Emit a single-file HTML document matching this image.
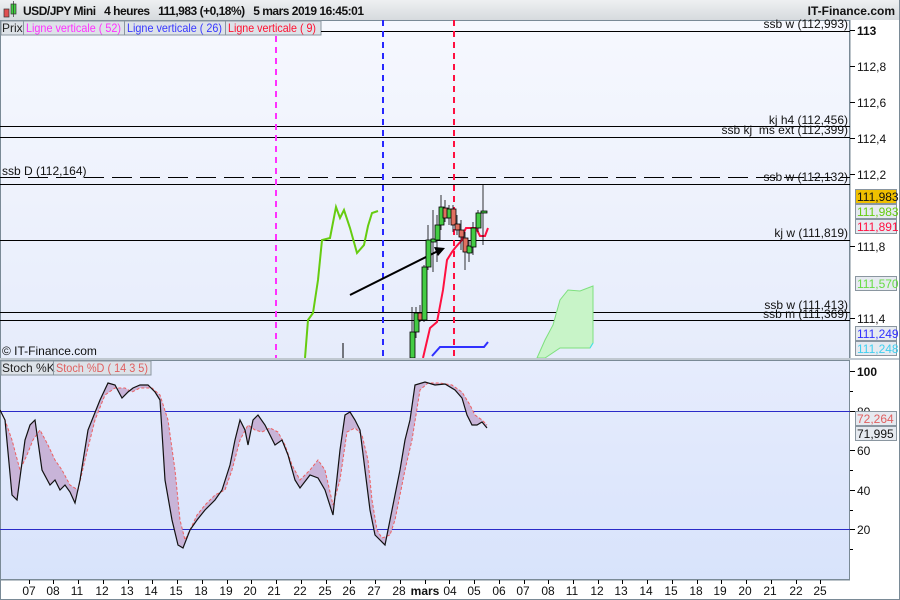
<!DOCTYPE html>
<html><head><meta charset="utf-8"><style>
body{margin:0;width:900px;height:600px;overflow:hidden;background:#fff;font-family:"Liberation Sans",sans-serif;}
svg{display:block}
text{white-space:pre}
</style></head><body>
<svg width="900" height="600" viewBox="0 0 900 600" xmlns="http://www.w3.org/2000/svg" font-family="Liberation Sans, sans-serif" font-size="12" xml:space="preserve">
<defs>
<linearGradient id="g1" x1="0" y1="0" x2="0" y2="1"><stop offset="0" stop-color="#f6f8fe"/><stop offset="1" stop-color="#e6ecfb"/></linearGradient>
<linearGradient id="g2" x1="0" y1="0" x2="0" y2="1"><stop offset="0" stop-color="#e6ecfd"/><stop offset="1" stop-color="#d8e3fb"/></linearGradient>
<linearGradient id="gh" x1="0" y1="0" x2="0" y2="1"><stop offset="0" stop-color="#eef0f2"/><stop offset="1" stop-color="#d6dade"/></linearGradient>
</defs>
<rect x="0" y="0" width="900" height="600" fill="#fff"/>
<rect x="0" y="0" width="900" height="20" fill="url(#gh)"/>
<rect x="4" y="9" width="5" height="8" fill="#e05050" stroke="#333" stroke-width="0.7"/>
<rect x="11" y="4" width="5" height="10" fill="#40d040" stroke="#333" stroke-width="0.7"/>
<line x1="13.5" y1="1" x2="13.5" y2="17" stroke="#333" stroke-width="0.7"/>
<text x="23" y="15" font-weight="bold" font-size="12" fill="#111" textLength="341" lengthAdjust="spacing">USD/JPY Mini   4 heures   111,983 (+0,18%)   5 mars 2019 16:45:01</text>
<text x="895" y="15" font-weight="bold" font-size="12" fill="#111" text-anchor="end">IT-Finance.com</text>
<rect x="0.5" y="20.5" width="849" height="338" fill="url(#g1)" stroke="#7a8a96"/>
<line x1="850" y1="20" x2="850" y2="358" stroke="#7a8a96"/>
<rect x="1" y="21" width="320" height="14" fill="#dde2e8" stroke="#8a96a0"/>
<text x="2" y="32" font-size="12" fill="#222">Prix</text>
<line x1="23.5" y1="21" x2="23.5" y2="35" stroke="#8a96a0"/>
<text x="26" y="32" font-size="12" fill="#ff30ff" textLength="95" lengthAdjust="spacingAndGlyphs">Ligne verticale ( 52)</text>
<line x1="124.5" y1="21" x2="124.5" y2="35" stroke="#8a96a0"/>
<text x="127" y="32" font-size="12" fill="#3838ff" textLength="95" lengthAdjust="spacingAndGlyphs">Ligne verticale ( 26)</text>
<line x1="225.5" y1="21" x2="225.5" y2="35" stroke="#8a96a0"/>
<text x="228" y="32" font-size="12" fill="#ff1030" textLength="88" lengthAdjust="spacingAndGlyphs">Ligne verticale ( 9)</text>
<g stroke="#000" stroke-width="1">
<line x1="321" y1="31.5" x2="850" y2="31.5"/>
<line x1="0" y1="126.5" x2="850" y2="126.5"/>
<line x1="0" y1="137.5" x2="850" y2="137.5"/>
<line x1="0" y1="177.5" x2="850" y2="177.5" stroke-dasharray="20,8"/>
<line x1="0" y1="184.5" x2="850" y2="184.5"/>
<line x1="0" y1="240.5" x2="850" y2="240.5"/>
<line x1="0" y1="312.5" x2="850" y2="312.5"/>
<line x1="0" y1="320.5" x2="850" y2="320.5"/>
</g>
<g font-size="12" fill="#111" text-anchor="end">
<text x="848" y="28">ssb w (112,993)</text>
<text x="848" y="124">kj h4 (112,456)</text>
<text x="848" y="134">ssb kj  ms ext (112,399)</text>
<text x="848" y="181">ssb w (112,132)</text>
<text x="848" y="237">kj w (111,819)</text>
<text x="848" y="309">ssb w (111,413)</text>
<text x="848" y="318">ssb m (111,369)</text>
</g>
<text x="2" y="175" font-size="12" fill="#111">ssb D (112,164)</text>
<line x1="276" y1="36" x2="276" y2="358" stroke="#ff30ff" stroke-width="2" stroke-dasharray="6,5"/>
<line x1="383" y1="20" x2="383" y2="358" stroke="#2828ff" stroke-width="2" stroke-dasharray="6,5"/>
<line x1="454" y1="20" x2="454" y2="358" stroke="#ff1040" stroke-width="2" stroke-dasharray="6,5"/>
<polygon points="537,358 545,340 553,325 560,300 568,290 580,291 593,286 593,343 590,348 560,348 545,358" fill="#c8f4c8" stroke="#7ee07e"/>
<line x1="590" y1="348" x2="593" y2="343" stroke="#40e0f0"/>
<polyline points="305,358 308,320 313,313 318,280 322,240 330,238 336,207 340,218 344,210 350,228 357,253 364,245 368,226 372,213 378,211" fill="none" stroke="#66cc10" stroke-width="2"/>
<line x1="343" y1="343" x2="343" y2="358" stroke="#000"/>
<line x1="350" y1="295" x2="438" y2="251" stroke="#000" stroke-width="2"/>
<polygon points="445,248 434,247 438,256" fill="#000"/>
<polyline points="423,358 430,328 437,322 443,290 447,260 452,252 455,248 462,240 464,232 466,228 476,228 480,236 485,236 488,228" fill="none" stroke="#ff1040" stroke-width="2"/>
<polyline points="432,356 440,347 484,347 488,342" fill="none" stroke="#3030ff" stroke-width="2"/>
<g stroke="#000" stroke-width="0.8">
<line x1="412" y1="307" x2="412" y2="358"/><rect x="410" y="332" width="5" height="26" fill="#44cc44"/>
<line x1="416" y1="307" x2="416" y2="338"/><rect x="414" y="313" width="5" height="19" fill="#44cc44"/>
<line x1="420" y1="305" x2="420" y2="322"/><rect x="418" y="313" width="5" height="7" fill="#e07060"/>
<line x1="424" y1="265" x2="424" y2="322"/><rect x="422" y="267" width="5" height="53" fill="#44cc44"/>
<line x1="428" y1="225" x2="428" y2="270"/><rect x="426" y="240" width="5" height="27" fill="#44cc44"/>
<line x1="433" y1="210" x2="433" y2="272"/><rect x="431" y="239" width="5" height="3" fill="#44cc44"/>
<line x1="437" y1="215" x2="437" y2="262"/><rect x="435" y="225" width="5" height="15" fill="#44cc44"/>
<line x1="441" y1="195" x2="441" y2="230"/><rect x="439" y="207" width="5" height="18" fill="#44cc44"/>
<line x1="445" y1="200" x2="445" y2="222"/><rect x="443" y="208" width="5" height="10" fill="#e07060"/>
<line x1="449" y1="205" x2="449" y2="225"/><rect x="447" y="209" width="5" height="9" fill="#44cc44"/>
<line x1="453" y1="205" x2="453" y2="232"/><rect x="451" y="209" width="5" height="16" fill="#e07060"/>
<line x1="457" y1="215" x2="457" y2="235"/><rect x="455" y="224" width="5" height="6" fill="#e07060"/>
<line x1="461" y1="220" x2="461" y2="250"/><rect x="459" y="230" width="5" height="7" fill="#e07060"/>
<line x1="465" y1="232" x2="465" y2="270"/><rect x="463" y="238" width="5" height="14" fill="#e07060"/>
<line x1="469" y1="240" x2="469" y2="262"/><rect x="467" y="246" width="5" height="7" fill="#44cc44"/>
<line x1="473" y1="222" x2="473" y2="255"/><rect x="471" y="228" width="5" height="19" fill="#44cc44"/>
<line x1="478" y1="210" x2="478" y2="232"/><rect x="476" y="213" width="5" height="15" fill="#44cc44"/>
<line x1="483" y1="185" x2="483" y2="245"/><rect x="481" y="211" width="6" height="2" fill="#44cc44"/>
</g>
<text x="2" y="355" font-size="12" fill="#111">© IT-Finance.com</text>
<g stroke="#000"><line x1="850" y1="30.5" x2="855" y2="30.5"/><line x1="850" y1="66.5" x2="855" y2="66.5"/><line x1="850" y1="102.5" x2="855" y2="102.5"/><line x1="850" y1="138.5" x2="855" y2="138.5"/><line x1="850" y1="174.5" x2="855" y2="174.5"/><line x1="850" y1="246.5" x2="855" y2="246.5"/><line x1="850" y1="318.5" x2="855" y2="318.5"/></g>
<g font-size="12" fill="#111">
<text x="857" y="35" font-weight="bold">113</text>
<text x="857" y="71">112,8</text><text x="857" y="107">112,6</text><text x="857" y="143">112,4</text><text x="857" y="179">112,2</text><text x="857" y="251">111,8</text><text x="857" y="323">111,4</text>
</g>
<g font-size="12">
<rect x="855.5" y="189.5" width="41" height="14" fill="#f0c000" stroke="#8a96a0"/><text x="857" y="201" fill="#111">111,983</text>
<rect x="855.5" y="204.5" width="41" height="14" fill="#e6eaf0" stroke="#8a96a0"/><text x="857" y="216" fill="#66cc10">111,983</text>
<rect x="855.5" y="219.5" width="41" height="14" fill="#e6eaf0" stroke="#8a96a0"/><text x="857" y="231" fill="#ff1040">111,891</text>
<rect x="855.5" y="276.5" width="41" height="14" fill="#e6eaf0" stroke="#8a96a0"/><text x="857" y="288" fill="#66dd44">111,570</text>
<rect x="855.5" y="326.5" width="41" height="14" fill="#e6eaf0" stroke="#8a96a0"/><text x="857" y="338" fill="#3030ff">111,249</text>
<rect x="855.5" y="341.5" width="41" height="14" fill="#e6eaf0" stroke="#8a96a0"/><text x="857" y="353" fill="#40d0f0">111,248</text>
</g>
<line x1="0" y1="359" x2="900" y2="359" stroke="#c0c8d0" stroke-width="2"/>
<rect x="0.5" y="360.5" width="849" height="219" fill="url(#g2)" stroke="#7a8a96"/>
<rect x="1" y="361" width="150" height="14" fill="#dde2e8" stroke="#8a96a0"/>
<text x="2" y="372" font-size="12" fill="#222">Stoch %K</text>
<line x1="53.5" y1="361" x2="53.5" y2="375" stroke="#8a96a0"/>
<text x="56" y="372" font-size="12" fill="#e06060" textLength="92" lengthAdjust="spacingAndGlyphs">Stoch %D ( 14 3 5)</text>
<line x1="0" y1="411.5" x2="850" y2="411.5" stroke="#2a2ac8"/>
<line x1="0" y1="529.5" x2="850" y2="529.5" stroke="#2a2ac8"/>
<polygon points="0,410 5,420 12,495 17,500 25,440 30,425 35,420 42,470 50,485 55,480 60,490 65,485 70,492 75,503 80,480 88,430 100,400 108,383 115,385 122,398 128,392 133,388 140,385 148,385 155,392 160,400 165,480 172,520 178,545 183,548 190,530 197,520 205,510 215,500 222,490 230,465 235,440 240,420 245,430 248,445 253,420 258,415 265,425 270,435 275,445 282,440 288,455 295,480 300,488 310,475 318,478 325,490 333,515 340,450 345,415 350,412 355,420 360,430 365,470 370,510 375,535 380,540 385,545 390,520 400,470 405,440 410,420 415,385 425,382 435,385 445,384 455,390 462,398 467,415 472,425 477,425 482,422 487,428 487,425 482,420 475,415 470,405 462,392 452,385 440,383 428,383 420,390 412,440 405,470 395,520 390,535 382,538 377,530 372,500 368,460 362,435 355,428 347,432 340,480 333,505 325,470 318,460 310,470 300,480 292,465 285,445 278,432 270,428 262,432 255,430 248,425 240,440 232,470 225,490 215,495 205,505 197,515 190,530 185,540 180,520 175,470 168,420 160,395 152,388 140,388 132,392 125,388 115,388 105,395 95,420 85,460 78,490 70,485 62,470 55,460 48,445 40,430 33,440 27,455 20,470 12,440 5,420 0,410" fill="#c8b4d8"/>
<polyline points="0,410 5,420 12,440 20,470 27,455 33,440 40,430 48,445 55,460 62,470 70,485 78,490 85,460 95,420 105,395 115,388 125,388 132,392 140,388 152,388 160,395 168,420 175,470 180,520 185,540 190,530 197,515 205,505 215,495 225,490 232,470 240,440 248,425 255,430 262,432 270,428 278,432 285,445 292,465 300,480 310,470 318,460 325,470 333,505 340,480 347,432 355,428 362,435 368,460 372,500 377,530 382,538 390,535 395,520 405,470 412,440 420,390 428,383 440,383 452,385 462,392 470,405 475,415 482,420 487,425" fill="none" stroke="#ee6060" stroke-width="1" stroke-dasharray="3,2"/>
<polyline points="0,410 5,420 12,495 17,500 25,440 30,425 35,420 42,470 50,485 55,480 60,490 65,485 70,492 75,503 80,480 88,430 100,400 108,383 115,385 122,398 128,392 133,388 140,385 148,385 155,392 160,400 165,480 172,520 178,545 183,548 190,530 197,520 205,510 215,500 222,490 230,465 235,440 240,420 245,430 248,445 253,420 258,415 265,425 270,435 275,445 282,440 288,455 295,480 300,488 310,475 318,478 325,490 333,515 340,450 345,415 350,412 355,420 360,430 365,470 370,510 375,535 380,540 385,545 390,520 400,470 405,440 410,420 415,385 425,382 435,385 445,384 455,390 462,398 467,415 472,425 477,425 482,422 487,428" fill="none" stroke="#111" stroke-width="1.2"/>
<g stroke="#000"><line x1="850" y1="371.5" x2="855" y2="371.5"/><line x1="850" y1="391.5" x2="853" y2="391.5"/><line x1="850" y1="411.5" x2="855" y2="411.5"/><line x1="850" y1="450.5" x2="855" y2="450.5"/><line x1="850" y1="470.5" x2="853" y2="470.5"/><line x1="850" y1="490.5" x2="855" y2="490.5"/><line x1="850" y1="510.5" x2="853" y2="510.5"/><line x1="850" y1="529.5" x2="855" y2="529.5"/><line x1="850" y1="549.5" x2="853" y2="549.5"/></g>
<g font-size="12" fill="#111">
<text x="857" y="376" font-weight="bold">100</text><text x="857" y="416">80</text><text x="857" y="455">60</text><text x="857" y="495">40</text><text x="857" y="534">20</text>
</g>
<rect x="855.5" y="411.5" width="41" height="14" fill="#e6eaf0" stroke="#8a96a0"/><text x="857" y="423" font-size="12" fill="#e06060">72,264</text>
<rect x="855.5" y="426.5" width="41" height="14" fill="#e6eaf0" stroke="#8a96a0"/><text x="857" y="438" font-size="12" fill="#111">71,995</text>
<line x1="0" y1="580" x2="850" y2="580" stroke="#7a8a96"/>
<line x1="0" y1="599.5" x2="900" y2="599.5" stroke="#7a8a96"/>
<line x1="0.5" y1="580" x2="0.5" y2="600" stroke="#7a8a96"/>
<line x1="899.5" y1="0" x2="899.5" y2="600" stroke="#7a8a96"/>
<g font-size="12" fill="#111" text-anchor="middle">
<text x="29" y="595">07</text><text x="53" y="595">08</text><text x="77" y="595">11</text><text x="102" y="595">12</text><text x="127" y="595">13</text><text x="151" y="595">14</text><text x="176" y="595">15</text><text x="201" y="595">18</text><text x="226" y="595">19</text><text x="250" y="595">20</text><text x="274" y="595">21</text><text x="300" y="595">22</text><text x="325" y="595">25</text><text x="349" y="595">26</text><text x="374" y="595">27</text><text x="399" y="595">28</text><text x="425" y="595" font-weight="bold">mars</text><text x="450" y="595">04</text><text x="474" y="595">05</text><text x="499" y="595">06</text><text x="523" y="595">07</text><text x="548" y="595">08</text><text x="572" y="595">11</text><text x="597" y="595">12</text><text x="621" y="595">13</text><text x="646" y="595">14</text><text x="671" y="595">15</text><text x="696" y="595">18</text><text x="720" y="595">19</text><text x="745" y="595">20</text><text x="770" y="595">21</text><text x="796" y="595">22</text><text x="820" y="595">25</text>
</g>
<g stroke="#000">
<line x1="29.5" y1="580" x2="29.5" y2="584"/><line x1="53.5" y1="580" x2="53.5" y2="584"/><line x1="78.5" y1="580" x2="78.5" y2="584"/><line x1="103.5" y1="580" x2="103.5" y2="584"/><line x1="128.5" y1="580" x2="128.5" y2="584"/><line x1="152.5" y1="580" x2="152.5" y2="584"/><line x1="177.5" y1="580" x2="177.5" y2="584"/><line x1="202.5" y1="580" x2="202.5" y2="584"/><line x1="227.5" y1="580" x2="227.5" y2="584"/><line x1="251.5" y1="580" x2="251.5" y2="584"/><line x1="276.5" y1="580" x2="276.5" y2="584"/><line x1="301.5" y1="580" x2="301.5" y2="584"/><line x1="326.5" y1="580" x2="326.5" y2="584"/><line x1="350.5" y1="580" x2="350.5" y2="584"/><line x1="375.5" y1="580" x2="375.5" y2="584"/><line x1="400.5" y1="580" x2="400.5" y2="584"/><line x1="425.5" y1="580" x2="425.5" y2="584"/><line x1="449.5" y1="580" x2="449.5" y2="584"/><line x1="474.5" y1="580" x2="474.5" y2="584"/><line x1="499.5" y1="580" x2="499.5" y2="584"/><line x1="524.5" y1="580" x2="524.5" y2="584"/><line x1="548.5" y1="580" x2="548.5" y2="584"/><line x1="573.5" y1="580" x2="573.5" y2="584"/><line x1="598.5" y1="580" x2="598.5" y2="584"/><line x1="622.5" y1="580" x2="622.5" y2="584"/><line x1="647.5" y1="580" x2="647.5" y2="584"/><line x1="672.5" y1="580" x2="672.5" y2="584"/><line x1="697.5" y1="580" x2="697.5" y2="584"/><line x1="721.5" y1="580" x2="721.5" y2="584"/><line x1="746.5" y1="580" x2="746.5" y2="584"/><line x1="771.5" y1="580" x2="771.5" y2="584"/><line x1="796.5" y1="580" x2="796.5" y2="584"/><line x1="820.5" y1="580" x2="820.5" y2="584"/>
</g>
</svg>
</body></html>
